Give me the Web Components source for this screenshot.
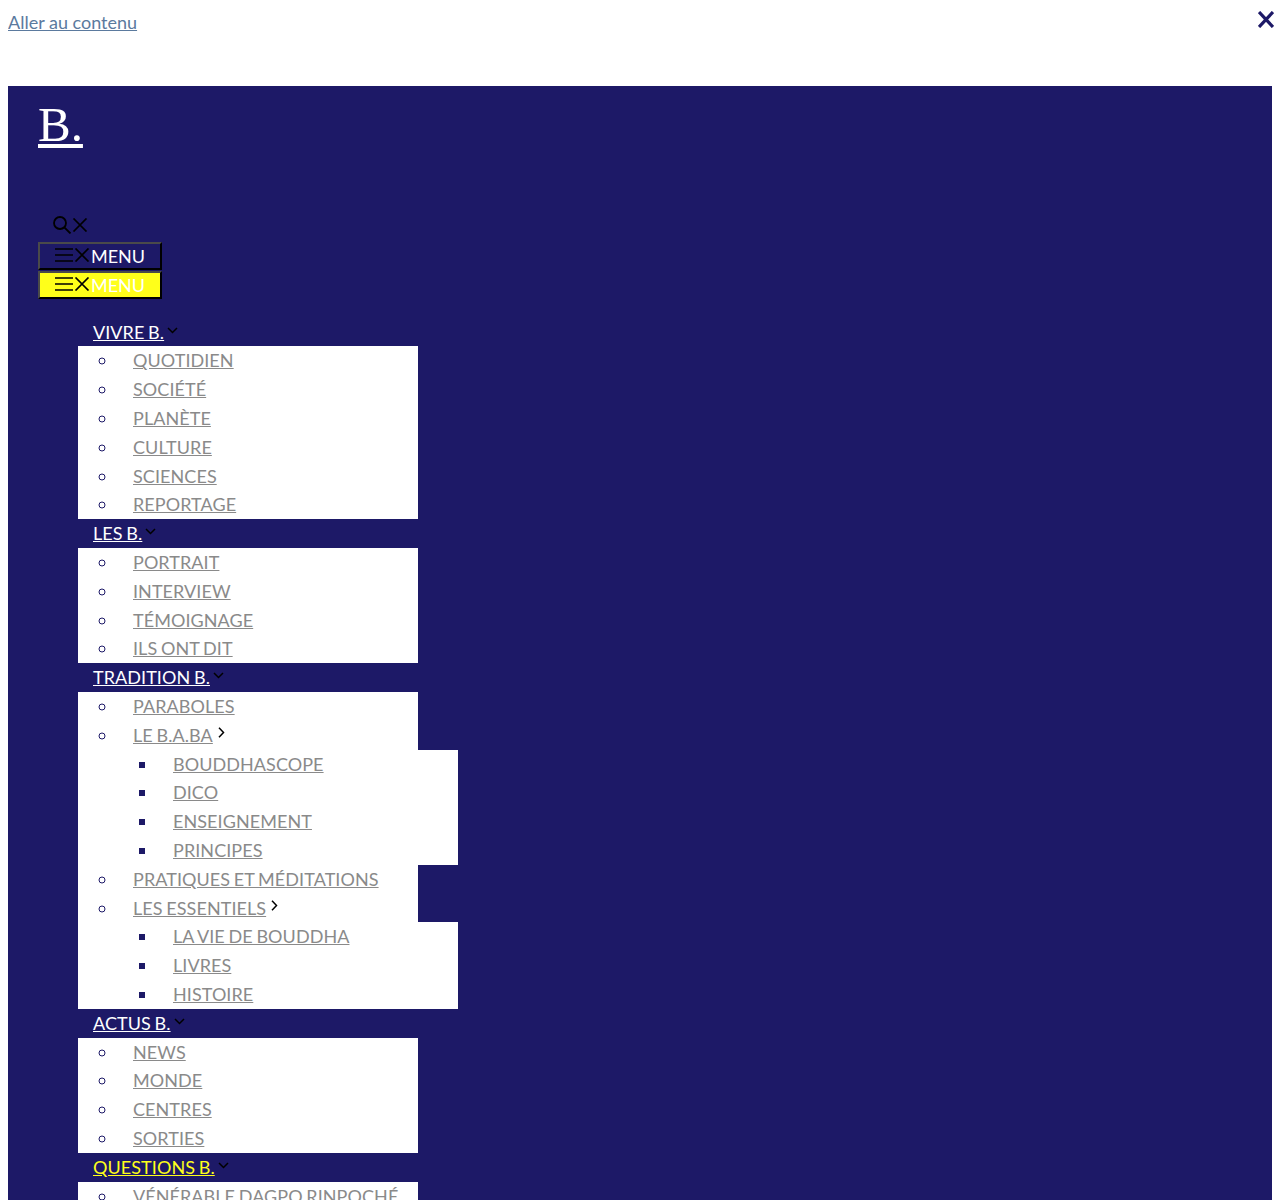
<!DOCTYPE html>
<html lang="fr">
<head>
<meta charset="utf-8">
<title>B.</title>
<style>
  html, body { background: #fff; }
  body { margin: 8px; font-family: Lato, sans-serif; font-size: 18px; line-height: 28.8px; }
</style>
</head>
<body>
<skip-bar></skip-bar>
<site-panel>
  <main-nav></main-nav>
</site-panel>

<script>
const NAVY = '#1d1967';

const icons = {
  search: `<svg width="19" height="18" viewBox="0 0 19 18" fill="none" stroke="#000" stroke-width="1.800"><circle cx="7" cy="7" r="6"/><path d="M11.300 11.300l6.200 6.200"/></svg>`,
  cross: `<svg width="16" height="14" viewBox="0 0 16 14" fill="none" stroke="#000" stroke-width="1.700"><path d="M1.500 .5l13 13M14.500 .5l-13 13"/></svg>`,
  bars: `<svg width="18" height="14" viewBox="0 0 18 14" fill="none" stroke="#000" stroke-width="1.500"><path d="M0 1h18M0 7h18M0 13h18"/></svg>`,
  down: `<svg width="11" height="7" viewBox="0 0 11 7" fill="none" stroke="#000" stroke-width="1.500"><path d="M1 1l4.500 4.500L10 1"/></svg>`,
  right: `<svg width="7" height="11" viewBox="0 0 7 11" fill="none" stroke="#000" stroke-width="1.500"><path d="M1 .8l4.500 4.700L1 10.200"/></svg>`
};

class SkipBar extends HTMLElement {
  connectedCallback() {
    this.attachShadow({ mode: 'open' });
    this.shadowRoot.innerHTML = `
      <style>
        :host { display: block; height: 78px; }
        a { color: #5b7a9e; text-decoration: underline; }
        button {
          position: absolute; top: 11px; right: 6px;
          width: 16px; height: 17px; padding: 0; border: 0; background: none; display: flex;
        }
      </style>
      <a href="#content">Aller au contenu</a>
      <button aria-label="Fermer">
        <svg width="16" height="17" viewBox="0 0 16 17" fill="none" stroke="${NAVY}" stroke-width="3.200"><path d="M1 1l14 15M15 1L1 16"/></svg>
      </button>
    `;
  }
}

class MenuButton extends HTMLElement {
  connectedCallback() {
    this.attachShadow({ mode: 'open' });
    this.shadowRoot.innerHTML = `
      <style>
        :host { display: block; width: 124px; height: 28px; }
        :host([active]) { margin-top: 1px; }
        button {
          box-sizing: border-box; width: 100%; height: 100%; padding: 0 0 0 15px;
          display: flex; align-items: center;
          background: ${NAVY}; color: #fff; font: inherit;
          border-style: solid; border-width: 2px; border-color: #4a4a4a #000 #000 #4a4a4a;
        }
        :host([active]) button { background: #ffff1a; }
        .ic { display: flex; margin-top: -3px; }
        .ic + .ic { margin-left: 1px; margin-right: 1px; }
      </style>
      <button>
        <span class="ic">${icons.bars}</span><span class="ic">${icons.cross}</span><span>MENU</span>
      </button>
    `;
  }
}

class SitePanel extends HTMLElement {
  connectedCallback() {
    this.attachShadow({ mode: 'open' });
    this.shadowRoot.innerHTML = `
      <style>
        :host { display: block; background: ${NAVY}; padding: 0 30px; color: #fff; }
        .logo {
          display: block; height: 127px; padding-top: 7px; box-sizing: border-box;
          font: 49px/64px "Liberation Serif", serif;
        }
        .logo a { color: #fff; }
        .search { display: flex; height: 19px; padding: 3px 0 0 15px; align-items: flex-start; }
        .search svg { display: block; }
        .search svg + svg { margin-top: 2px; }
        .buttons { margin-top: 7px; }
        .rest { margin-top: 18.700px; }
      </style>
      <div class="logo"><a href="#">B.</a></div>
      <div class="search">${icons.search}${icons.cross}</div>
      <div class="buttons">
        <menu-button></menu-button>
        <menu-button active></menu-button>
      </div>
      <div class="rest"><slot></slot></div>
    `;
  }
}

const MENU = [
  { label: 'VIVRE B.', items: ['QUOTIDIEN', 'SOCIÉTÉ', 'PLANÈTE', 'CULTURE', 'SCIENCES', 'REPORTAGE'] },
  { label: 'LES B.', items: ['PORTRAIT', 'INTERVIEW', 'TÉMOIGNAGE', 'ILS ONT DIT'] },
  { label: 'TRADITION B.', items: [
    'PARABOLES',
    { label: 'LE B.A.BA', items: ['BOUDDHASCOPE', 'DICO', 'ENSEIGNEMENT', 'PRINCIPES'] },
    'PRATIQUES ET MÉDITATIONS',
    { label: 'LES ESSENTIELS', items: ['LA VIE DE BOUDDHA', 'LIVRES', 'HISTOIRE'] }
  ] },
  { label: 'ACTUS B.', items: ['NEWS', 'MONDE', 'CENTRES', 'SORTIES'] },
  { label: 'QUESTIONS B.', current: true, items: ['VÉNÉRABLE DAGPO RINPOCHÉ'] }
];

function renderSub(items) {
  return `<ul class="sub">${items.map(it => {
    if (typeof it === 'string') return `<li><a href="#">${it}</a></li>`;
    return `<li><a href="#">${it.label}</a><span class="caret r">${icons.right}</span>${renderSub(it.items)}</li>`;
  }).join('')}</ul>`;
}

class MainNav extends HTMLElement {
  connectedCallback() {
    this.attachShadow({ mode: 'open' });
    this.shadowRoot.innerHTML = `
      <style>
        :host { display: block; word-spacing: -1px; letter-spacing: 0.07px; }
        ul { margin: 0; padding: 0 0 0 40px; }
        .top { list-style: none; }
        .top > li > a { margin-left: 15px; color: #fff; }
        .top > li > a.current { color: #ffff1a; }
        .sub { list-style: circle; background: #fff; width: 340px; box-sizing: border-box; color: ${NAVY}; }
        .sub .sub { list-style: square; }
        .sub a { margin-left: 15px; color: #8a8a8a; }
        .caret { display: inline-block; position: relative; top: -5px; margin-left: 3px; }
        .caret.r { top: -4px; margin-left: 5px; }
        .caret svg { display: inline-block; }
      </style>
      <ul class="top">
        ${MENU.map(m => `<li><a href="#" class="${m.current ? 'current' : ''}">${m.label}</a><span class="caret">${icons.down}</span>${renderSub(m.items)}</li>`).join('')}
      </ul>
    `;
  }
}

customElements.define('skip-bar', SkipBar);
customElements.define('menu-button', MenuButton);
customElements.define('site-panel', SitePanel);
customElements.define('main-nav', MainNav);
</script>
</body>
</html>
